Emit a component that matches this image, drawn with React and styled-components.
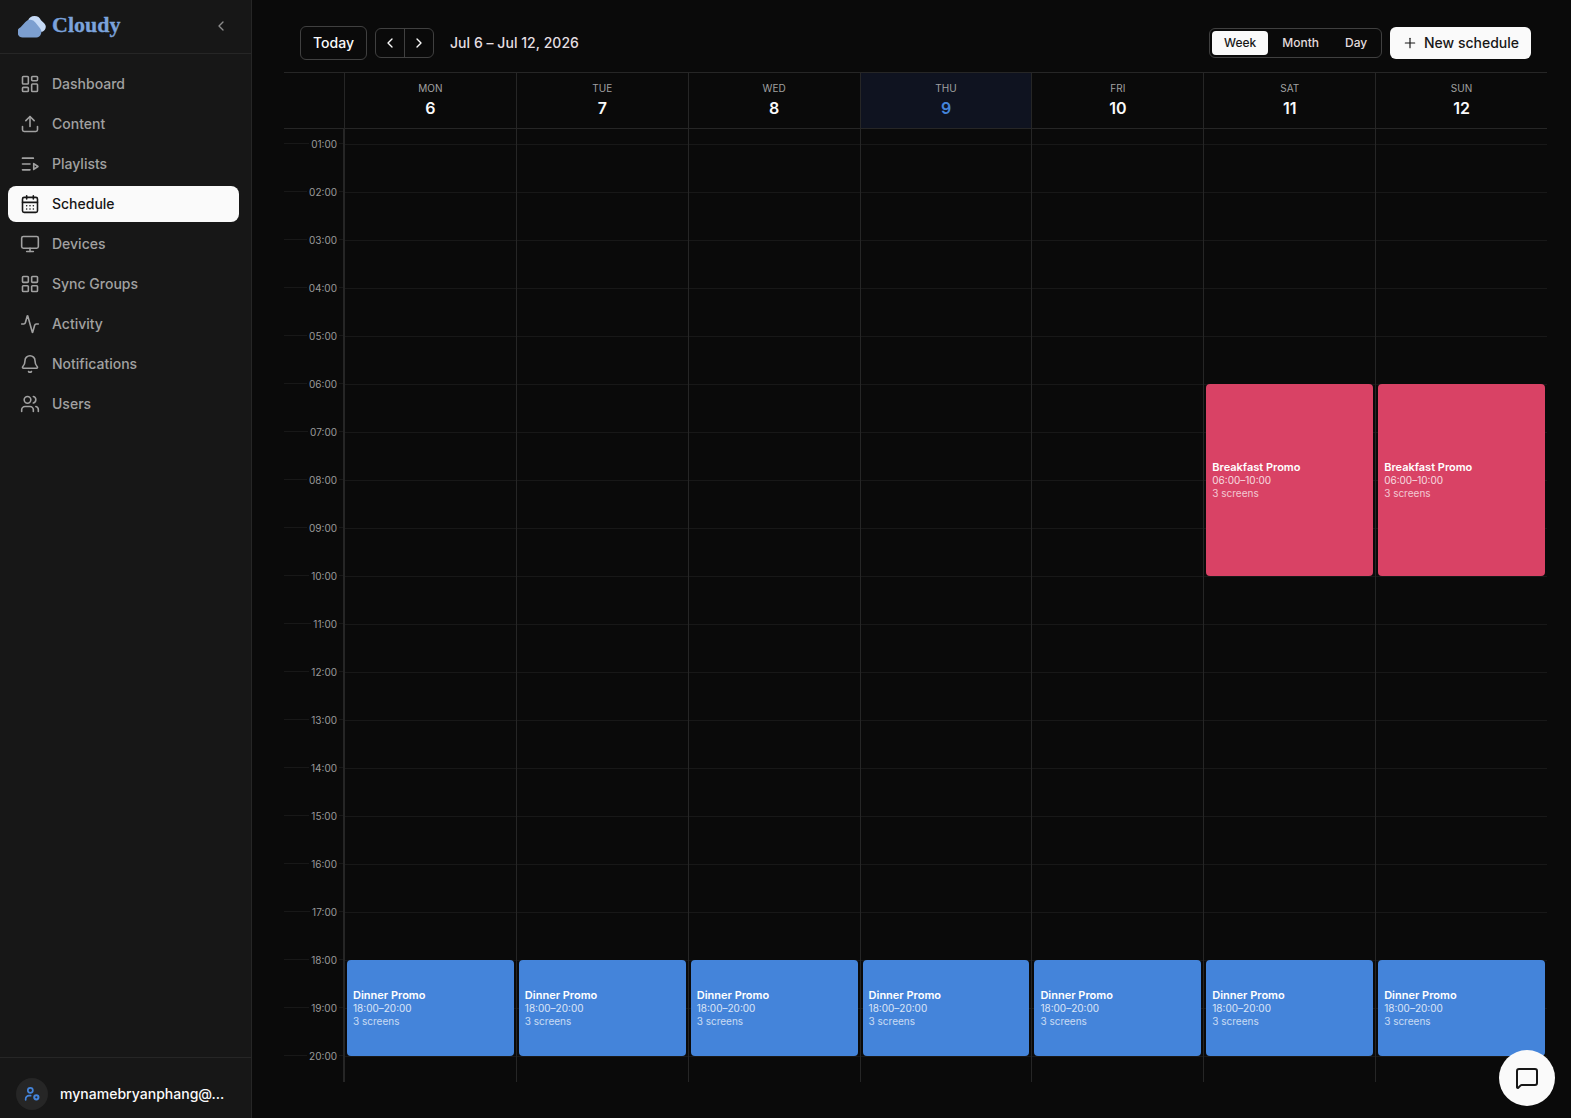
import React from "react";
import styled, { createGlobalStyle, css } from "styled-components";
import {
  Activity, Bell, CalendarDays, ChevronLeft, ChevronRight, LayoutDashboard,
  LayoutGrid, MessageSquare, Monitor, Plus, Upload, Users,
} from "lucide-react";

const HOUR = 48;

const Global = createGlobalStyle`
  *, *::before, *::after { box-sizing: border-box; }
  html, body { margin: 0; background: #0a0a0a; }
  body, button { font-family: Inter, "Liberation Sans", sans-serif; }
  button { margin: 0; padding: 0; border: 0; background: none; color: inherit; font-size: 14px; font-weight: 500; }
`;

const Shell = styled.div`
  display: flex;
  height: 100vh;
  overflow: hidden;
  color: #fafafa;
`;

const Sidebar = styled.aside`
  display: flex;
  flex-direction: column;
  width: 252px;
  flex: none;
  background: #171717;
  border-right: 1px solid #262626;
`;

const Brand = styled.header`
  display: flex;
  align-items: center;
  height: 54px;
  padding: 0 22px 2px 18px;
  border-bottom: 1px solid #262626;
`;

const BrandName = styled.span`
  flex: 1;
  margin-left: 6px;
  padding-bottom: 1px;
  font: 700 22px/28px "Liberation Serif", serif;
  color: #7ba3dc;
  -webkit-text-stroke: 0.3px #7ba3dc;
`;

const Collapse = styled.button`
  display: flex;
  color: #8c8c8c;
`;

const Nav = styled.nav`
  display: flex;
  flex: 1;
  flex-direction: column;
  gap: 4px;
  padding: 12px 12px 12px 8px;
`;

const NavItem = styled.a`
  display: flex;
  align-items: center;
  gap: 12px;
  height: 36px;
  padding: 0 12px;
  border-radius: 8px;
  font-size: 14px;
  font-weight: 500;
  color: #a1a1a1;
  ${(p) => p.$active && css`
    background: #fafafa;
    color: #171717;
  `}
`;

const Label = styled.span`
  padding-bottom: 2px;
  letter-spacing: ${(p) => p.$spacing || 0}px;
`;

const Account = styled.footer`
  display: flex;
  align-items: center;
  gap: 12px;
  height: 61px;
  padding: 12px 16px 0;
  border-top: 1px solid #262626;
  font-size: 14px;
  font-weight: 500;
`;

const Avatar = styled.span`
  display: grid;
  place-items: center;
  width: 32px;
  height: 32px;
  border-radius: 50%;
  background: #262626;
  color: #4484da;
`;

const Main = styled.main`
  display: flex;
  flex: 1;
  flex-direction: column;
  padding: 14px 24px 36px 32px;
`;

const Toolbar = styled.div`
  display: flex;
  align-items: center;
  gap: 8px;
  height: 58px;
  padding: 0 16px;
`;

const Today = styled.button`
  width: 67px;
  height: 34px;
  padding-bottom: 1px;
  border: 1px solid #404040;
  border-radius: 6px;
`;

const Stepper = styled.div`
  display: flex;
  width: 59px;
  height: 30px;
  border: 1px solid #404040;
  border-radius: 6px;
`;

const Step = styled.button`
  display: grid;
  flex: 1;
  place-items: center;
  & + & { border-left: 1px solid #404040; }
`;

const Range = styled.h1`
  flex: 1;
  margin: 0 0 0 8px;
  padding-bottom: 2px;
  font-size: 14px;
  font-weight: 500;
  letter-spacing: 0.04px;
  color: #e5dfe1;
`;

const Views = styled.div`
  display: flex;
  gap: 2px;
  width: 173px;
  height: 30px;
  padding: 2px;
  border: 1px solid #404040;
  border-radius: 6px;
`;

const View = styled.button`
  height: 24px;
  padding: 0 12px 1px;
  border-radius: 4px;
  font-size: 12px;
  color: ${(p) => (p.$active ? "#171717" : "#e2dbdd")};
  background: ${(p) => (p.$active ? "#fafafa" : "transparent")};
`;

const Create = styled.button`
  display: flex;
  align-items: center;
  justify-content: center;
  gap: 6px;
  width: 141px;
  height: 32px;
  border-radius: 6px;
  background: #fafafa;
  color: #171717;
`;

const WeekHead = styled.div`
  display: grid;
  grid-template-columns: 60px repeat(7, minmax(0, 1fr));
  height: 57px;
  border: solid #262626;
  border-width: 1px 0;
`;

const DayHead = styled.div`
  display: flex;
  flex-direction: column;
  align-items: center;
  padding-top: 7px;
  border-left: 1px solid #262626;
  background: ${(p) => (p.$today ? "#0f1320" : "transparent")};
`;

const DayName = styled.span`
  font-size: 10px;
  line-height: 16px;
  color: #a1a1a1;
`;

const DayNumber = styled.span`
  font-size: 16px;
  font-weight: 600;
  line-height: 24px;
  color: ${(p) => (p.$today ? "#4484da" : "#fafafa")};
`;

const Viewport = styled.div`
  flex: 1;
  min-height: 0;
  overflow: hidden;
`;

const WeekBody = styled.div`
  display: grid;
  grid-template-columns: 60px repeat(7, minmax(0, 1fr));
  height: ${21 * HOUR}px;
  margin-top: -33px;
`;

const Hours = styled.div`
  border-right: 1px solid #262626;
`;

const HourCell = styled.div`
  position: relative;
  height: ${HOUR}px;
  border-bottom: 1px solid #181818;
`;

const HourLabel = styled.span`
  position: absolute;
  right: 4px;
  bottom: -9px;
  padding: 0 2px;
  background: #0a0a0a;
  font-size: 10px;
  line-height: 16px;
  color: #9a9a9a;
`;

const DayColumn = styled.div`
  position: relative;
  border-left: 1px solid #262626;
`;

const Slot = styled.div`
  height: ${HOUR}px;
  border-top: 1px solid #181818;
`;

const Event = styled.article`
  position: absolute;
  top: ${(p) => p.$start * HOUR}px;
  left: 2px;
  right: 2px;
  height: ${(p) => (p.$end - p.$start) * HOUR}px;
  display: flex;
  flex-direction: column;
  justify-content: center;
  padding: 0 6px;
  border-radius: 4px;
  background: ${(p) => p.$color};
  font-size: 10px;
  line-height: 13px;
  color: #fff;
`;

const EventTitle = styled.strong`
  font-size: 11px;
  font-weight: 600;
`;

const EventTime = styled.span`
  opacity: 0.8;
`;

const EventScreens = styled.span`
  opacity: 0.7;
`;

const Chat = styled.button`
  position: fixed;
  right: 16px;
  bottom: 12px;
  display: grid;
  place-items: center;
  width: 56px;
  height: 56px;
  border-radius: 50%;
  background: #fafafa;
  color: #171717;
`;

const CloudLogo = () => (
  <svg width="28" height="24" viewBox="0 0 28 24">
    <path d="M10 6.5A7 7 0 0 1 23 6.3l3.2 2.9a5 5 0 0 1-3.4 8.6L15 16z" fill="#c6daf6" />
    <path d="M5.2 23.4A5.3 5.3 0 0 1 2.6 13.3L7.4 8a6.4 6.4 0 0 1 10 .5l4.6 5.7a5.6 5.6 0 0 1-3.6 9.2z" fill="#7c9fd0" />
  </svg>
);

const stroke = { fill: "none", stroke: "currentColor", strokeLinecap: "round", strokeLinejoin: "round" };

const PlaylistIcon = () => (
  <svg width="20" height="20" viewBox="0 0 24 24" strokeWidth="2" {...stroke}>
    <path d="M3 5h13M3 12h9M3 19h9M16.5 11.5v7l5-3.5z" />
  </svg>
);

const AccountIcon = () => (
  <svg width="16" height="16" viewBox="0 0 24 24" strokeWidth="2.5" {...stroke}>
    <circle cx="9.5" cy="6.5" r="3.8" />
    <path d="M2.5 21v-1.5a5 5 0 0 1 5-5H10" />
    <circle cx="18.5" cy="17" r="3.2" strokeWidth="3" />
  </svg>
);

const NAV = [
  ["Dashboard", LayoutDashboard], ["Content", Upload], ["Playlists", PlaylistIcon],
  ["Schedule", CalendarDays], ["Devices", Monitor], ["Sync Groups", LayoutGrid],
  ["Activity", Activity], ["Notifications", Bell], ["Users", Users],
];

const DAYS = [["MON", 6], ["TUE", 7], ["WED", 8], ["THU", 9], ["FRI", 10], ["SAT", 11], ["SUN", 12]];

const DINNER = { title: "Dinner Promo", start: 18, end: 20, color: "#4484da" };
const BREAKFAST = { title: "Breakfast Promo", start: 6, end: 10, color: "#d94265" };

const clock = (h) => `${String(h).padStart(2, "0")}:00`;
const slots = Array.from({ length: 21 }, (_, h) => h);

export default function App() {
  return (
    <Shell>
      <Global />
      <Sidebar>
        <Brand>
          <CloudLogo />
          <BrandName>Cloudy</BrandName>
          <Collapse><ChevronLeft size={16} /></Collapse>
        </Brand>
        <Nav>
          {NAV.map(([label, Icon]) => (
            <NavItem key={label} $active={label === "Schedule"}>
              <Icon size={20} strokeWidth={1.9} />
              <Label>{label}</Label>
            </NavItem>
          ))}
        </Nav>
        <Account>
          <Avatar><AccountIcon /></Avatar>
          <Label $spacing={0.02}>mynamebryanphang@...</Label>
        </Account>
      </Sidebar>
      <Main>
        <Toolbar>
          <Today>Today</Today>
          <Stepper>
            <Step><ChevronLeft size={16} /></Step>
            <Step><ChevronRight size={16} /></Step>
          </Stepper>
          <Range>Jul 6 – Jul 12, 2026</Range>
          <Views>
            <View $active>Week</View>
            <View>Month</View>
            <View>Day</View>
          </Views>
          <Create>
            <Plus size={16} strokeWidth={1.75} />
            <Label>New schedule</Label>
          </Create>
        </Toolbar>
        <WeekHead>
          <span />
          {DAYS.map(([name, number]) => (
            <DayHead key={name} $today={number === 9}>
              <DayName>{name}</DayName>
              <DayNumber $today={number === 9}>{number}</DayNumber>
            </DayHead>
          ))}
        </WeekHead>
        <Viewport>
          <WeekBody>
            <Hours>
              {slots.slice(1).map((h) => (
                <HourCell key={h}><HourLabel>{clock(h)}</HourLabel></HourCell>
              ))}
            </Hours>
            {DAYS.map(([name, number]) => (
              <DayColumn key={name}>
                {slots.map((h) => <Slot key={h} />)}
                {(number > 10 ? [BREAKFAST, DINNER] : [DINNER]).map((e) => (
                  <Event key={e.title} $start={e.start} $end={e.end} $color={e.color}>
                    <EventTitle>{e.title}</EventTitle>
                    <EventTime>{clock(e.start)}–{clock(e.end)}</EventTime>
                    <EventScreens>3 screens</EventScreens>
                  </Event>
                ))}
              </DayColumn>
            ))}
          </WeekBody>
        </Viewport>
      </Main>
      <Chat><MessageSquare size={24} /></Chat>
    </Shell>
  );
}
